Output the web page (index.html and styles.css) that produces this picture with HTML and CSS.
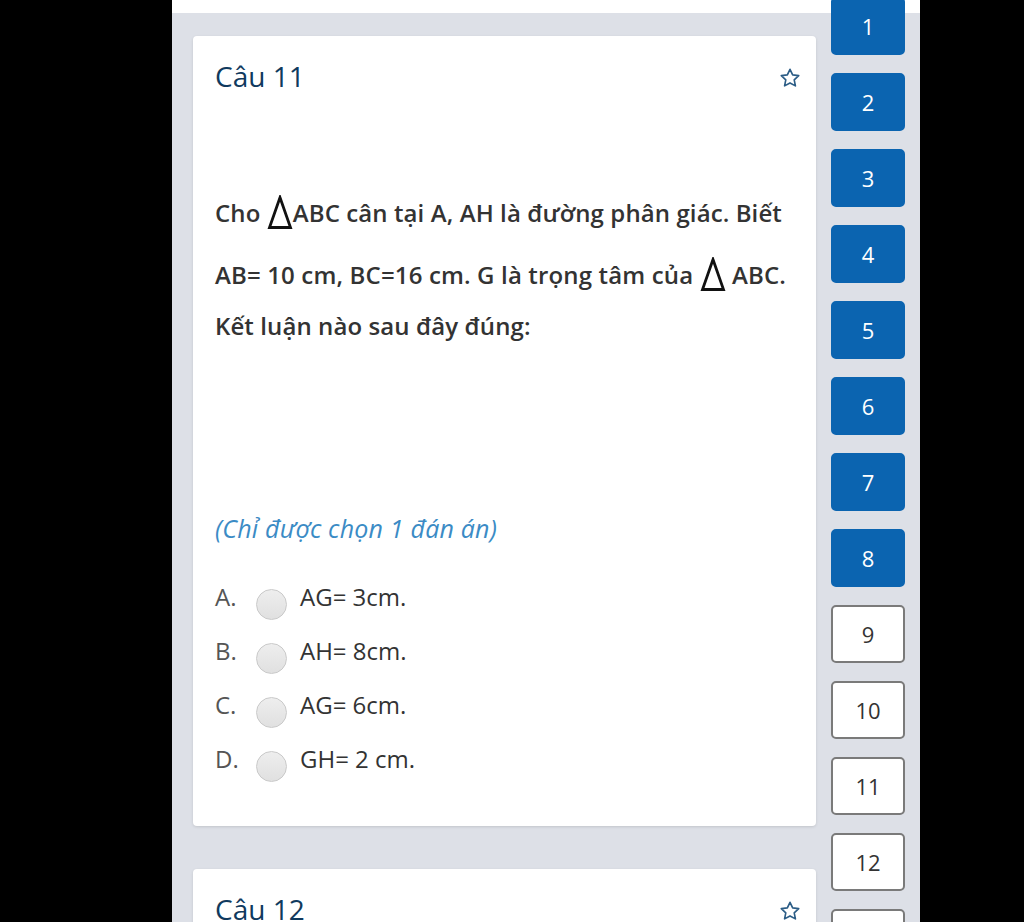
FILE: index.html
```html
<!DOCTYPE html>
<html lang="vi">
    <head>
        <meta charset="UTF-8" />
        <meta name="viewport" content="width=device-width, initial-scale=1.0" />
        <title>Câu 11</title>
        <link rel="stylesheet" href="styles.css">
    </head>
    <body>
        <div class="page">
            <div class="top-strip"></div>

            <div class="main-content">
                <div class="question-list">
                    <div class="question-card">
                        <div class="question-header">
                            <h2 class="question-title">Câu 11</h2>
                            <svg class="star-icon" viewBox="0 0 24 24" width="22" height="22">
                                <polygon points="12,2.5 14.9,8.6 21.5,9.4 16.6,14 17.9,20.6 12,17.4 6.1,20.6 7.4,14 2.5,9.4 9.1,8.6" />
                            </svg>
                        </div>

                        <div class="question-body">
                            <p class="line">Cho <svg class="triangle" viewBox="0 0 26 35" width="26" height="35"><polygon points="13,2.5 23.5,32.5 2.5,32.5" /></svg>ABC cân tại A, AH là đường phân giác. Biết</p>
                            <p class="line line-second">AB= 10 cm, BC=16 cm. G là trọng tâm của <svg class="triangle" viewBox="0 0 26 35" width="26" height="35"><polygon points="13,2.5 23.5,32.5 2.5,32.5" /></svg> ABC.</p>
                            <p class="line line-third">Kết luận nào sau đây đúng:</p>
                        </div>

                        <div class="hint">(Chỉ được chọn 1 đán án)</div>

                        <div class="options">
                            <div class="option">
                                <span class="option-letter">A.</span>
                                <span class="radio"></span>
                                <span class="option-text">AG= 3cm.</span>
                            </div>
                            <div class="option">
                                <span class="option-letter">B.</span>
                                <span class="radio"></span>
                                <span class="option-text">AH= 8cm.</span>
                            </div>
                            <div class="option">
                                <span class="option-letter">C.</span>
                                <span class="radio"></span>
                                <span class="option-text">AG= 6cm.</span>
                            </div>
                            <div class="option">
                                <span class="option-letter">D.</span>
                                <span class="radio"></span>
                                <span class="option-text">GH= 2 cm.</span>
                            </div>
                        </div>
                    </div>

                    <div class="question-card">
                        <div class="question-header">
                            <h2 class="question-title">Câu 12</h2>
                            <svg class="star-icon" viewBox="0 0 24 24" width="22" height="22">
                                <polygon points="12,2.5 14.9,8.6 21.5,9.4 16.6,14 17.9,20.6 12,17.4 6.1,20.6 7.4,14 2.5,9.4 9.1,8.6" />
                            </svg>
                        </div>
                    </div>
                </div>

                <div class="question-nav">
                    <button class="nav-btn done">1</button>
                    <button class="nav-btn done">2</button>
                    <button class="nav-btn done">3</button>
                    <button class="nav-btn done">4</button>
                    <button class="nav-btn done">5</button>
                    <button class="nav-btn done">6</button>
                    <button class="nav-btn done">7</button>
                    <button class="nav-btn done">8</button>
                    <button class="nav-btn">9</button>
                    <button class="nav-btn">10</button>
                    <button class="nav-btn">11</button>
                    <button class="nav-btn">12</button>
                    <button class="nav-btn">13</button>
                </div>
            </div>
        </div>
    </body>
</html>
```

FILE: styles.css
```css
:root {
    --page-bg: #dde0e7;
    --card-bg: #ffffff;
    --title-color: #103a5e;
    --text-color: #333333;
    --hint-color: #3b8bc5;
    --nav-blue: #0b64b0;
    --star-color: #2c5d86;
}

html, body {
    margin: 0;
    padding: 0;
    background-color: #000000;
    height: 100%;
    overflow: hidden;
}

body {
    font-family: 'Open Sans', 'Noto Sans', sans-serif;
    color: var(--text-color);
}

.page {
    margin-left: 172px;
    width: 748px;
    height: 100%;
    background-color: var(--page-bg);
}

.top-strip {
    height: 13px;
    background-color: white;
}

.main-content {
    display: flex;
    padding-left: 21px;
    padding-top: 23px;
}

.question-list {
    width: 623px;
    display: flex;
    flex-direction: column;
    gap: 43px;
}

.question-card {
    background-color: var(--card-bg);
    border-radius: 4px;
    box-shadow: 0 1px 3px rgba(0, 0, 0, 0.12);
    padding: 21px 15px 50px 22px;
}

.question-header {
    display: flex;
    justify-content: space-between;
    align-items: flex-start;
}

.question-title {
    margin: 0;
    font-size: 28px;
    font-weight: 500;
    line-height: 38px;
    color: var(--title-color);
}

.star-icon {
    margin-top: 10px;
    fill: none;
    stroke: var(--star-color);
    stroke-width: 1.8;
    stroke-linejoin: round;
}

.question-body {
    margin-top: 100px;
}

.line {
    margin: 0;
    font-size: 24px;
    font-weight: 600;
    letter-spacing: 0.1px;
    line-height: 36px;
    color: var(--text-color);
}

.line-second {
    margin-top: 26px;
    letter-spacing: 0.15px;
}

.line-third {
    margin-top: 15px;
}

.triangle {
    vertical-align: -8px;
    fill: none;
    stroke: #111111;
    stroke-width: 2.8;
    stroke-linejoin: miter;
}

.hint {
    margin-top: 167px;
    font-size: 25px;
    font-style: italic;
    letter-spacing: 0.2px;
    line-height: 34px;
    color: var(--hint-color);
}

.options {
    margin-top: 35px;
    display: flex;
    flex-direction: column;
    gap: 20px;
}

.option {
    display: flex;
    align-items: flex-start;
    height: 34px;
    line-height: 34px;
}

.option-letter {
    width: 41px;
    font-size: 24px;
    color: #555555;
}

.radio {
    width: 29px;
    height: 29px;
    border-radius: 50%;
    border: 1px solid #c9c9c9;
    background: linear-gradient(#eeeeee, #e0e0e0);
    margin-top: 9px;
    margin-right: 13px;
}

.option-text {
    font-size: 24px;
    color: var(--text-color);
}

.question-nav {
    margin-left: 15px;
    margin-top: -39px;
    display: flex;
    flex-direction: column;
    gap: 18px;
}

.nav-btn {
    width: 74px;
    height: 58px;
    border: 2px solid #7a7a7a;
    border-radius: 5px;
    background-color: white;
    color: #333333;
    font-family: 'Open Sans', 'Noto Sans', sans-serif;
    font-size: 22px;
    padding: 0;
}

.nav-btn.done {
    background-color: var(--nav-blue);
    border-color: var(--nav-blue);
    color: white;
}
```
